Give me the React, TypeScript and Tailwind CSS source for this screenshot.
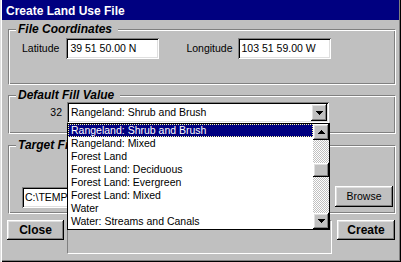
import React from "react";

const raised =
  "shadow-[inset_-1px_-1px_0_#000000,inset_1px_1px_0_#ffffff,inset_-2px_-2px_0_#808080,inset_2px_2px_0_#dfdfdf]";
const sunken =
  "shadow-[inset_1px_1px_0_#808080,inset_-1px_-1px_0_#ffffff,inset_2px_2px_0_#000000,inset_-2px_-2px_0_#dfdfdf]";
const etched =
  "border border-t-[#808080] border-l-[#808080] border-b-white border-r-white shadow-[inset_1px_1px_0_#ffffff,inset_-1px_-1px_0_#808080]";
const legendCls =
  "-ml-[6px] pl-[2px] pr-[6px] bg-[#c0c0c0] text-[12px] leading-[14px] font-bold italic";

function UpArrow() {
  return (
    <svg width="7" height="4" viewBox="0 0 7 4" shapeRendering="crispEdges">
      <rect x="3" y="0" width="1" height="1" fill="#000" />
      <rect x="2" y="1" width="3" height="1" fill="#000" />
      <rect x="1" y="2" width="5" height="1" fill="#000" />
      <rect x="0" y="3" width="7" height="1" fill="#000" />
    </svg>
  );
}

function DownArrow() {
  return (
    <svg width="7" height="4" viewBox="0 0 7 4" shapeRendering="crispEdges">
      <rect x="0" y="0" width="7" height="1" fill="#000" />
      <rect x="1" y="1" width="5" height="1" fill="#000" />
      <rect x="2" y="2" width="3" height="1" fill="#000" />
      <rect x="3" y="3" width="1" height="1" fill="#000" />
    </svg>
  );
}

const items = [
  "Rangeland: Shrub and Brush",
  "Rangeland: Mixed",
  "Forest Land",
  "Forest Land: Deciduous",
  "Forest Land: Evergreen",
  "Forest Land: Mixed",
  "Water",
  "Water: Streams and Canals",
];

export default function App() {
  return (
    <div className="relative w-[401px] h-[262px] overflow-hidden bg-[#c0c0c0] text-black text-[10.5px] font-['Liberation_Sans',Arial,sans-serif] shadow-[inset_1px_0_0_#dfdfdf,inset_2px_0_0_#ffffff,inset_-1px_-1px_0_#000000,inset_-2px_-2px_0_#808080]">
      {/* Title bar */}
      <div className="ml-[2px] mr-[2px] h-[20px] bg-[#000080] pl-[4px] text-[12px] font-bold leading-[22px] text-white">
        Create Land Use File
      </div>

      {/* File Coordinates */}
      <fieldset className={`mt-[2px] ml-[8px] w-[388px] pl-[13px] pt-[2px] pb-[25px] ${etched}`}>
        <legend className={legendCls}>File Coordinates</legend>
        <div className="flex h-[21px] items-center">
          <span>Latitude</span>
          <div className={`ml-[7px] flex h-[21px] w-[93px] items-center bg-white pl-[4px] ${sunken}`}>
            39 51 50.00 N
          </div>
          <span className="ml-[27px]">Longitude</span>
          <div className={`ml-[5px] flex h-[21px] w-[93px] items-center bg-white pl-[4px] ${sunken}`}>
            103 51 59.00 W
          </div>
        </div>
      </fieldset>

      {/* Default Fill Value */}
      <fieldset className={`mt-[3px] ml-[8px] w-[388px] pl-[13px] pt-0 pb-[10px] ${etched}`}>
        <legend className={legendCls}>Default Fill Value</legend>
        <div className="flex h-[21px] items-center">
          <span className="w-[40px] text-right">32</span>
          <div className={`ml-[5px] flex h-[21px] w-[262px] items-center justify-between bg-white pl-[4px] pr-[2px] ${sunken}`}>
            <span>Rangeland: Shrub and Brush</span>
            <div className={`flex h-[17px] w-[16px] items-center justify-center bg-[#c0c0c0] ${raised}`}>
              <DownArrow />
            </div>
          </div>
        </div>
      </fieldset>

      {/* Target File */}
      <fieldset className={`mt-[4px] ml-[8px] w-[388px] pl-[13px] pt-[35px] pb-[5px] ${etched}`}>
        <legend className={legendCls}>Target File</legend>
        <div className="flex h-[21px] items-start">
          <div className={`flex h-[21px] w-[303px] items-center bg-white pl-[3px] ${sunken}`}>
            C:\TEMP\LANDUSE.LU
          </div>
          <div className={`-mt-[1px] ml-[10px] flex h-[21px] w-[58px] items-center justify-center ${raised}`}>
            Browse
          </div>
        </div>
      </fieldset>

      {/* Bottom row */}
      <div className="mt-[6px] flex items-start">
        <div className={`ml-[7px] flex h-[20px] w-[57px] items-center justify-center text-[12px] font-bold ${raised}`}>
          Close
        </div>
        <div className="ml-[3px] h-[34px] w-[265px] border border-t-[#808080] border-l-[#808080] border-b-white border-r-white" />
        <div className={`ml-[5px] flex h-[20px] w-[58px] items-center justify-center text-[12px] font-bold ${raised}`}>
          Create
        </div>
      </div>

      {/* Dropped-down list */}
      <div className="absolute left-[67px] top-[123px] flex h-[107px] w-[263px] border border-black bg-white">
        <div className="flex-1">
          {items.map((it, i) => (
            <div
              key={it}
              className={
                i === 0
                  ? "h-[13px] whitespace-nowrap bg-[#000080] pl-[3px] leading-[13px] text-white outline-1 outline-dotted outline-[#ffffa0] -outline-offset-1"
                  : "h-[13px] whitespace-nowrap pl-[3px] leading-[13px]"
              }
            >
              {it}
            </div>
          ))}
        </div>
        <div className="flex w-[16px] flex-col">
          <div className={`flex h-[16px] items-center justify-center bg-[#c0c0c0] ${raised}`}>
            <UpArrow />
          </div>
          <div className="flex-1 pt-[23px] bg-[repeating-conic-gradient(#c0c0c0_0%_25%,#ffffff_0%_50%)] [background-size:2px_2px]">
            <div className={`h-[14px] bg-[#c0c0c0] ${raised}`} />
          </div>
          <div className={`flex h-[16px] items-center justify-center bg-[#c0c0c0] ${raised}`}>
            <DownArrow />
          </div>
        </div>
      </div>
    </div>
  );
}
